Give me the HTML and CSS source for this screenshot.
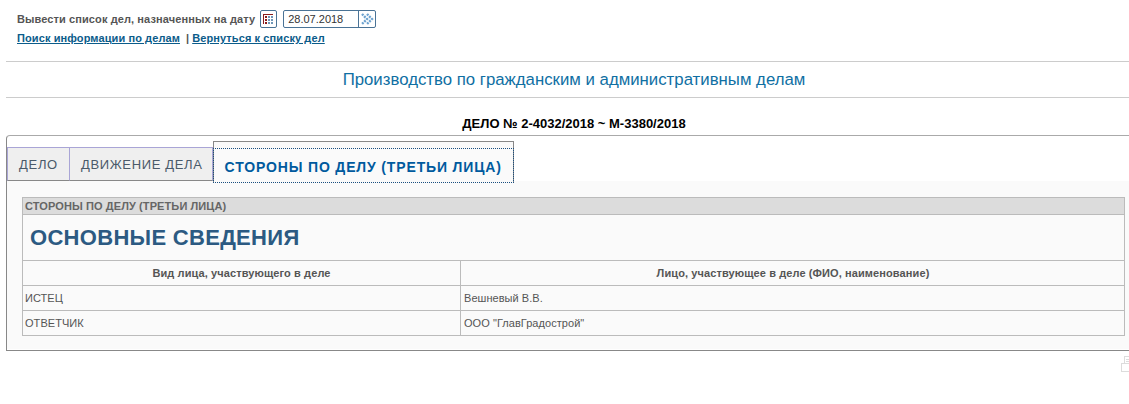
FILE: index.html
```html
<!DOCTYPE html>
<html>
	<head>
		<meta charset=utf-8>
		<title>Стороны по делу</title>
		<link rel="stylesheet" href="styles.css">
	</head>
	<body>
		<div class="page">
			<div class="date-row">
				<span class="date-label">Вывести список дел, назначенных на дату</span>
				<span class="cal-btn">
					<svg width="15" height="16" viewBox="0 0 15 16">
						<g fill="#8a1c1c">
							<rect x="2" y="3" width="1" height="10"/>
							<rect x="2" y="3" width="10" height="1"/>
							<rect x="4" y="5" width="2" height="2"/>
							<rect x="4" y="8" width="2" height="2"/>
							<rect x="4" y="11" width="2" height="2"/>
						</g>
						<g fill="#6f97b8">
							<rect x="7" y="5" width="2" height="2"/>
							<rect x="10" y="5" width="2" height="2"/>
							<rect x="7" y="8" width="2" height="2"/>
							<rect x="10" y="8" width="2" height="2"/>
							<rect x="7" y="11" width="2" height="2"/>
							<rect x="10" y="11" width="2" height="2"/>
						</g>
					</svg>
				</span>
				<span class="date-field">
					<span class="date-value">28.07.2018</span>
					<span class="date-go">
						<svg width="16" height="16" viewBox="0 0 16 16">
							<path d="M3 3l5 5-5 5M8 3l5 5-5 5" fill="none" stroke="#6ea3d0" stroke-width="2.4" stroke-dasharray="2 1"/>
						</svg>
					</span>
				</span>
			</div>
			<div class="link-row">
				<a href="#">Поиск информации по делам</a>
				<span class="sep">|</span>
				<a href="#">Вернуться к списку дел</a>
			</div>
			<h1 class="court-title">Производство по гражданским и административным делам</h1>
			<div class="case-no">ДЕЛО № 2-4032/2018 ~ М-3380/2018</div>
			<div class="tabs-box">
				<div class="tabs">
					<div class="tab tab-first">ДЕЛО</div>
					<div class="tab">ДВИЖЕНИЕ ДЕЛА</div>
					<div class="tab tab-active"><span>СТОРОНЫ ПО ДЕЛУ (ТРЕТЬИ ЛИЦА)</span></div>
				</div>
				<div class="panel">
					<table class="info">
						<colgroup><col class="col-a"><col></colgroup>
						<tr><td colspan="2" class="caption">СТОРОНЫ ПО ДЕЛУ (ТРЕТЬИ ЛИЦА)</td></tr>
						<tr><td colspan="2" class="section">ОСНОВНЫЕ СВЕДЕНИЯ</td></tr>
						<tr class="head">
							<td>Вид лица, участвующего в деле</td>
							<td>Лицо, участвующее в деле (ФИО, наименование)</td>
						</tr>
						<tr>
							<td>ИСТЕЦ</td>
							<td>Вешневый В.В.</td>
						</tr>
						<tr>
							<td>ОТВЕТЧИК</td>
							<td>ООО "ГлавГрадострой"</td>
						</tr>
					</table>
				</div>
			</div>
			<div class="print-row">
				<svg width="22" height="17" viewBox="0 0 22 17">
					<g fill="#fff" stroke="#dcdcdc">
						<rect x="3.5" y="0.5" width="11" height="9"/>
						<rect x="0.5" y="7.5" width="20" height="8"/>
					</g>
					<path d="M5 3.5h8M5 5.5h8" stroke="#dcdcdc"/>
				</svg>
			</div>
		</div>
	</body>
</html>
```

FILE: styles.css
```css
html, body { margin: 0; padding: 0; overflow: hidden; background: #fff; }
body { font-family: "Liberation Sans", Arial, sans-serif; font-size: 11px; color: #555; }

.page { width: 1136px; margin-left: 6px; }

.date-row {
	display: flex;
	align-items: center;
	height: 18px;
	padding: 10px 0 0 11px;
}
.date-label { font-weight: bold; color: #555; letter-spacing: 0.1px; }
.cal-btn {
	width: 15px; height: 16px;
	margin-left: 5px;
	border: 1px solid #4a7396;
	border-radius: 2px;
	display: flex;
	overflow: hidden;
}
.date-field {
	display: flex;
	height: 16px;
	margin-left: 6px;
	border: 1px solid #4a7396;
	border-radius: 2px;
	font-size: 11px;
	color: #333;
}
.date-value { width: 70px; padding-left: 4px; line-height: 17px; }
.date-go {
	width: 16px;
	border-left: 1px solid #4a7396;
	display: flex;
}

.link-row { padding: 3px 0 0 11px; height: 14px; line-height: 14px; }
.link-row a { color: #0b5c8a; font-weight: bold; letter-spacing: 0.1px; }
.sep { margin-left: 3px; font-weight: bold; color: #555; }

.court-title {
	margin: 16px 0 0;
	height: 35px;
	border-top: 1px solid #ccc;
	border-bottom: 1px solid #ccc;
	font-size: 16.8px;
	font-weight: normal;
	line-height: 35px;
	text-align: center;
	color: #0f6fa3;
}
.case-no {
	margin-top: 19px;
	height: 14px;
	line-height: 14px;
	font-size: 13px;
	font-weight: bold;
	color: #000;
	text-align: center;
}

.tabs-box {
	margin-top: 4px;
	height: 214px;
	border: 1px solid #aaa;
	border-right: none;
	border-left-color: #888;
	border-bottom-color: #888;
	border-radius: 4px 0 0 0;
}
.tabs {
	display: flex;
	align-items: flex-end;
	height: 45px;
}
.tab {
	height: 32px;
	line-height: 34px;
	padding: 0 9px 0 11px;
	background: #efefef;
	border: 1px solid #a9a5d6;
	border-left: none;
	border-bottom: 1px solid #888;
	font-size: 13px;
	letter-spacing: 0.65px;
	color: #4a5a6a;
}
.tab-first { border-left: 1px solid #a9a5d6; padding: 0 11px 0 11px; letter-spacing: 0.7px; }
.tab-active {
	height: 40px;
	margin-bottom: -1px;
	padding: 0;
	background: #fafafa;
	border: 1px solid #888;
	border-bottom: none;
}
.tab-active span {
	display: block;
	margin: 6px -1px 0;
	height: 33px;
	padding: 0 11px;
	border: 1px dotted #1a4f80;
	font-size: 14px;
	font-weight: bold;
	line-height: 36px;
	letter-spacing: 0.85px;
	color: #005a9e;
}

.panel { background: #fafafa; height: 168px; padding: 16px 0 0 15px; box-sizing: border-box; }

.info {
	width: 1103px;
	border-collapse: collapse;
	table-layout: fixed;
	font-size: 11px;
	letter-spacing: 0.05px;
	color: #555;
}
.info td { border: 1px solid #bbb; padding: 0 2px; height: 24px; }
.info td + td { padding-left: 3px; }
.col-a { width: 438px; }
.info .caption { height: 16px; background: #dcdcdc; font-weight: bold; letter-spacing: 0.1px; color: #666; }
.info .section {
	height: 45px;
	padding-left: 7px;
	font-size: 22px;
	font-weight: bold;
	letter-spacing: 0.3px;
	color: #2c5a82;
}
.head td { font-weight: bold; text-align: center; letter-spacing: 0.1px; }

.print-row {
	display: flex;
	justify-content: flex-end;
	padding: 5px 0 0;
	width: 1137px;
}
```
